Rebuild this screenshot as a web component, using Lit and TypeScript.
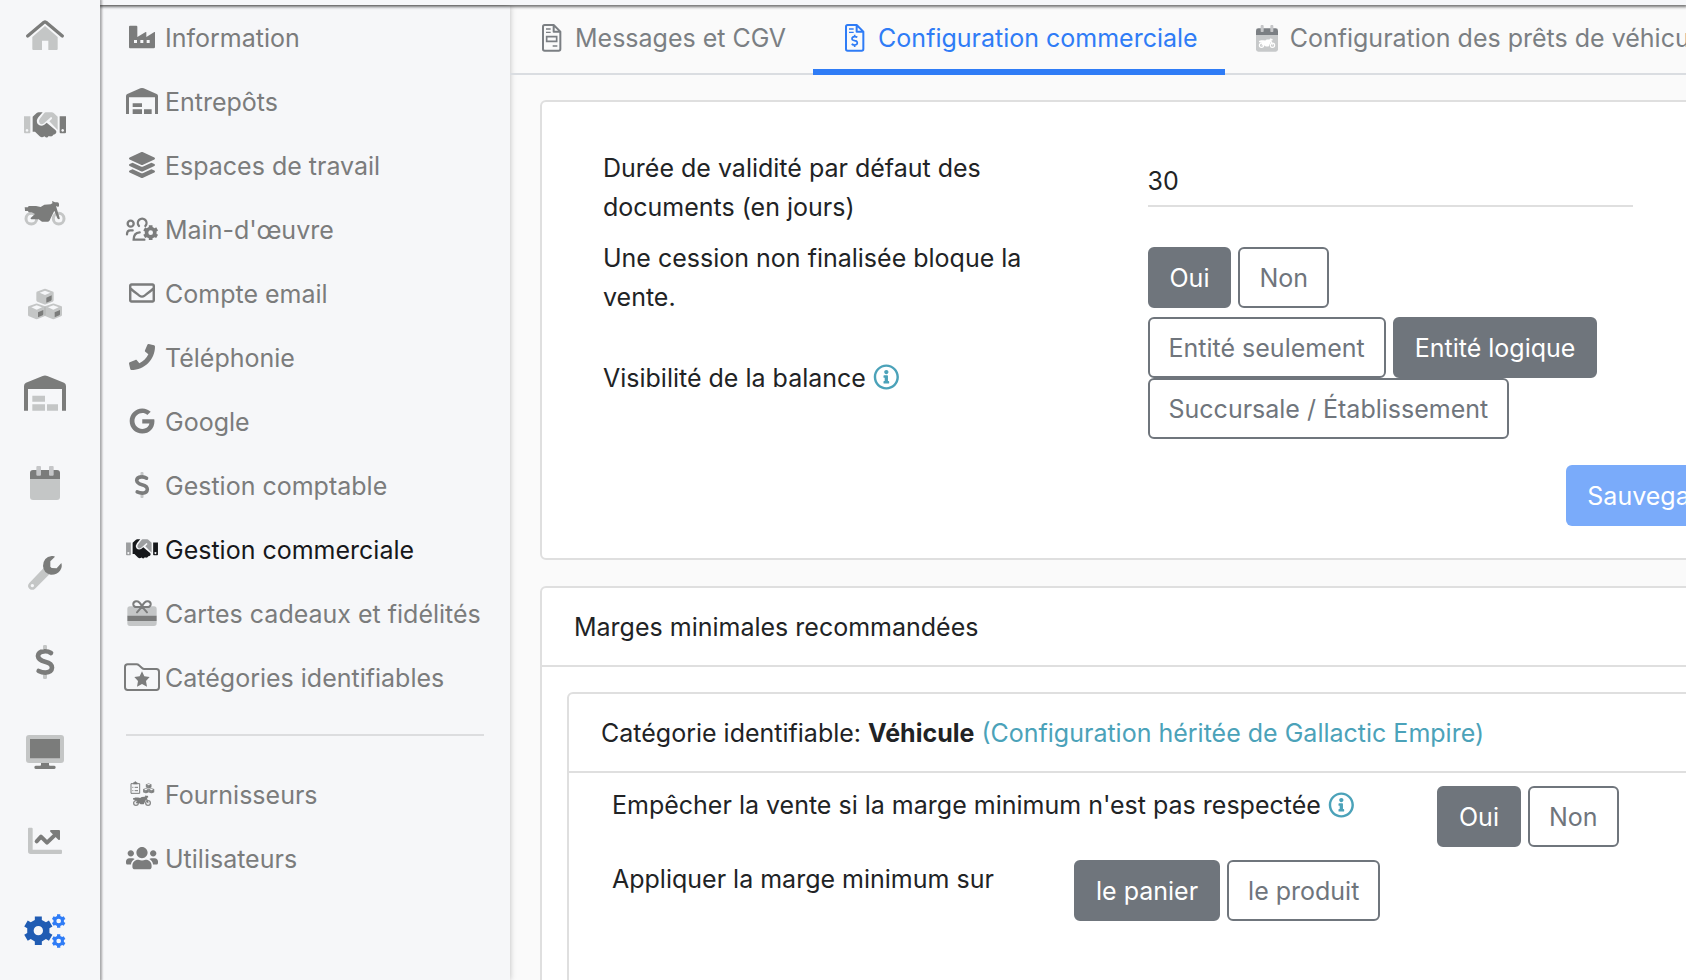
import { LitElement, html, svg, css, nothing, type TemplateResult, type SVGTemplateResult } from "lit";
import { customElement, property, state } from "lit/decorators.js";
import { classMap } from "lit/directives/class-map.js";

/* ---------- icon drawing helpers ---------- */

function gearPath(cx: number, cy: number, outer: number, inner: number, hole: number, teeth: number): string {
  const step = (Math.PI * 2) / teeth;
  const points: string[] = [];
  for (let i = 0; i < teeth; i++) {
    const a = i * step - Math.PI / 2;
    const corners: [number, number][] = [
      [inner, -0.3],
      [outer, -0.23],
      [outer, 0.23],
      [inner, 0.3],
    ];
    for (const [r, k] of corners) {
      points.push(`${(cx + r * Math.cos(a + k * step)).toFixed(1)} ${(cy + r * Math.sin(a + k * step)).toFixed(1)}`);
    }
  }
  return (
    `M${points.join("L")}Z` +
    `M${cx - hole} ${cy}a${hole} ${hole} 0 1 0 ${hole * 2} 0a${hole} ${hole} 0 1 0 ${-hole * 2} 0Z`
  );
}

const gear = (cls: string, cx: number, cy: number, outer: number, inner: number, hole: number, teeth = 6) =>
  svg`<path class=${cls} fill-rule="evenodd" d=${gearPath(cx, cy, outer, inner, hole, teeth)}></path>`;

/* Shapes below are centred on 0,0 in a space of three units per pixel. */
const handshake = svg`
  <path class="lo" fill-rule="evenodd" d="M-63-26h19v48q0 3-3 3h-13q-3 0-3-3ZM-54 12a4 4 0 1 0 .1 0Z"/>
  <path class="hi" fill-rule="evenodd" d="M44-26h19v48q0 3-3 3H47q-3 0-3-3ZM53 12a4 4 0 1 0 .1 0Z"/>
  <path class="lo" d="M2-38H20q4 0 7 3L38-25V15L13-11l8-8q1-4-3-5L-2-6q-8 7-14 1-5-6 0-13L-2-36q2-2 4-2Z"/>
  <path class="hi" d="M-37-25-25-36q3-2 6-2h12L-20-23q-8 10-2 20 9 9 20 2l7-6L32 16q4 4 1 9-3 4-8 4-3 6-9 5-4 0-5-1-3 6-9 4l-4-3q-7 6-14 0L-30 20h-7Z"/>`;

const motorcycle = svg`
  <circle class="lo-line" cx="-41" cy="14" r="16" stroke-width="9"/>
  <circle class="lo-line" cx="41" cy="14" r="16" stroke-width="9"/>
  <path class="hi" d="M-51-20q0-4 4-4h20l14 3 11-7 19-1 6-4-2-3q-1-2 2-2l7 3h7q5 0 5 5v5q0 4-4 3l-5-2 11 36q1 4-2 4t-5-3L28-10 13 21q-2 2-5 2h-17l-10-7h-21q-4 0-3-4l13-12-10-5h-8q-3-2-3-4h-9q0-6-1-11Z"/>`;

const cube = (cx: number, cy: number) => svg`<g transform=${`translate(${cx} ${cy})`}>
    <path class="lo" d="M-25-14-3-22q3-1 6 0l22 8q1 1 1 3v23q0 3-3 4L3 24q-3 1-6 0l-20-8q-3-1-3-4v-23Z"/>
    <path class="cut" d="M-16-11 0-17 16-11 0-4Z"/>
    <path class="hi" d="M4 4 20-3V9q0 3-2 4L4 19Z"/>
  </g>`;

const cubes = svg`${cube(0, -23)}${cube(-25, 21)}${cube(25, 21)}`;

const dollar = svg`
  <path class="lo" d="M-6-37v-10q0-4 4-4h4q4 0 4 4v10ZM-6 37v10q0 4 4 4h4q4 0 4-4V37Z"/>
  <path class="hi-line" stroke-width="14" stroke-linecap="round" d="M18-27Q9-33-3-32-20-31-21-18-20-6 0-1 21 4 21 17 20 31 1 32-9 32-19 27"/>`;

const icons: Record<string, SVGTemplateResult> = {
  home: svg`
    <path class="lo" d="M0-27 38 6v36q0 3-3 3H10V17H-9v28h-26q-3 0-3-3V6Z"/>
    <path class="hi-line" stroke-width="10" stroke-linecap="round" stroke-linejoin="round" d="M-52 3-3-38q3-2 6 0L52 3"/>`,
  handshake,
  motorcycle,
  cubes,
  warehouse: svg`
    <path class="hi" d="M-63 53v-74q0-7 6-10l50-20q7-3 14 0l50 20q6 3 6 10v74H51v-65H-51v65Z"/>
    <path class="lo" d="M-38 8H0v18h-38ZM-38 34H0v19h-38ZM6 34h33v19H6Z"/>`,
  calendar: svg`
    <path class="lo" d="M-45-12h90v54q0 9-9 9h-72q-9 0-9-9Z"/>
    <path class="hi" d="M-45-12v-18q0-9 9-9h72q9 0 9 9v18Z"/>
    <path class="mid" d="M-26-48q0-3 3-3h8q3 0 3 3v23q0 3-3 3h-8q-3 0-3-3ZM12-48q0-3 3-3h8q3 0 3 3v23q0 3-3 3h-8q-3 0-3-3Z"/>`,
  wrench: svg`
    <path class="lo" fill-rule="evenodd" d="M-4-15 14 3-30 47q-8 7-17 0-8-8 0-17ZM-38 33a5 5 0 1 0 .1 0Z"/>
    <path class="hi" d="M30-49 16-35v16l4 4 15 1L49-30q4 12-4 23Q35 6 17 5-4 1-6-21-5-48 20-51q7-1 10 2Z"/>`,
  dollar,
  monitor: svg`
    <rect class="lo" x="-57" y="-51" width="114" height="84" rx="9"/>
    <path class="hi" d="M-45-39h90v58h-90ZM-12 33h24v6q0 2 3 2h13q4 0 4 5t-4 5h-56q-4 0-4-5t4-5h13q3 0 3-2Z"/>`,
  chart: svg`
    <path class="lo" d="M-51-37q0-3 3-3h8q3 0 3 3v63h85q3 0 3 3v7q0 3-3 3h-91q-8 0-8-8Z"/>
    <path class="hi-line" stroke-width="12" stroke-linejoin="round" stroke-linecap="round" d="M-25 1-12-13 6 5 32-20"/>
    <path class="hi" d="M16-28q-3-5 2-5h24q3 0 3 3v24q0 5-5 2Z"/>`,
  cogs: svg`${gear("hi", -20, -1, 44, 34, 14)}${gear("lo", 41, -30, 21, 16, 7)}${gear("lo", 41, 30, 21, 16, 7)}`,
  industry: svg`
    <path class="hi" fill-rule="evenodd" d="M-39-34q0-3 3-3h19q3 0 3 3v31l25-15q2-1 2 1v14l24-15q2-1 2 1v44q0 4-4 4h-71q-3 0-3-3ZM-24 6v9h9V6ZM-5 6v9h9V6ZM14 6v9h9V6Z"/>`,
  depot: svg`
    <path class="hi" d="M-48 36v-54q0-4 4-6l39-17q5-2 10 0l39 17q4 2 4 6v54h-9v-50h-78v50ZM-28 4H0v11h-28ZM-28 22H0v14h-28ZM6 22h23v14H6Z"/>`,
  layers: svg`<g transform="translate(-39 -42) scale(.1523)"><path class="hi" d="M12.41 148.02l232.94 105.67c6.8 3.09 14.49 3.09 21.29 0l232.94-105.67c16.55-7.51 16.55-32.52 0-40.03L266.65 2.31a25.607 25.607 0 0 0-21.29 0L12.41 107.98c-16.55 7.51-16.55 32.53 0 40.04zm487.18 88.28l-58.09-26.33-161.64 73.27c-7.56 3.43-15.59 5.17-23.86 5.17s-16.29-1.74-23.86-5.17L70.51 209.97l-58.1 26.33c-16.55 7.5-16.55 32.5 0 40l232.94 105.59c6.8 3.08 14.49 3.08 21.29 0L499.59 276.3c16.55-7.5 16.55-32.5 0-40zm0 127.8l-57.87-26.23-161.86 73.37c-7.56 3.43-15.59 5.17-23.86 5.17s-16.29-1.74-23.86-5.17L70.29 337.87 12.41 364.1c-16.55 7.5-16.55 32.5 0 40l232.94 105.59c6.8 3.08 14.49 3.08 21.29 0L499.59 404.1c16.55-7.5 16.55-32.5 0-40z"/></g>`,
  workforce: svg`
    <circle class="hi-line" cx="-34" cy="-19" r="9" stroke-width="7"/>
    <path class="hi-line" stroke-width="7" stroke-linecap="round" d="M10-12a13 13 0 1 0-19 0M-45 13Q-45 1-35 1h7M7 29h-32q0-21 18-22"/>
    ${gear("hi", 26, 8, 23, 18, 7)}`,
  envelope: svg`<g transform="translate(-39 -42) scale(.1523)"><path class="hi" d="M464 64H48C21.49 64 0 85.49 0 112v288c0 26.51 21.49 48 48 48h416c26.51 0 48-21.49 48-48V112c0-26.51-21.49-48-48-48zm0 48v40.805c-22.422 18.259-58.168 46.651-134.587 106.49-16.841 13.247-50.201 45.072-73.413 44.701-23.208.375-56.579-31.459-73.413-44.701C106.18 199.465 70.425 171.067 48 152.805V112h416zM48 400V214.398c22.914 18.251 55.409 43.862 104.938 82.646 21.857 17.205 60.134 55.186 103.062 54.955 42.717.231 80.509-37.199 103.053-54.947 49.528-38.783 82.032-64.401 104.947-82.653V400H48z"/></g>`,
  phone: svg`<g transform="translate(-39 -42) scale(.1523)"><path class="hi" d="M493.4 24.6l-104-24c-11.3-2.6-22.9 3.3-27.5 13.9l-48 112c-4.2 9.8-1.4 21.3 6.9 28l60.6 49.6c-36 76.7-98.9 140.5-177.2 177.2l-49.6-60.6c-6.8-8.3-18.2-11.1-28-6.9l-112 48C3.9 366.5-2 378.1.6 389.4l24 104C27.1 504.2 36.7 512 48 512c256.1 0 464-207.5 464-464 0-11.2-7.7-20.9-18.6-23.4z"/></g>`,
  google: svg`<g transform="translate(-37 -42) scale(.1523)"><path class="hi" d="M488 261.8C488 403.3 391.1 504 248 504 110.8 504 0 393.2 0 256S110.8 8 248 8c66.8 0 123 24.5 166.3 64.9l-67.5 64.9C258.5 52.6 94.3 116.6 94.3 256c0 86.5 69.1 156.6 153.7 156.6 98.2 0 135-70.4 140.8-106.9H248v-85.3h236.1c2.3 12.7 3.9 24.9 3.9 41.4z"/></g>`,
  accounting: svg`<g transform="translate(0 -3) scale(.76)">${dollar}</g>`,
  sales: svg`<g transform="translate(0 -3) scale(.76)">${handshake}</g>`,
  gift: svg`
    <path class="lo" d="M-44-15q0-8 8-8h72q8 0 8 8V5h-88ZM-44 21h88v7q0 8-8 8h-72q-8 0-8-8Z"/>
    <path class="hi" d="M-44 5h88v16h-88Z"/>
    <path class="hi-line" stroke-width="6" stroke-linecap="round" d="M0-22q-7-17-18-16-9 2-8 10 2 8 11 7 8 0 15-1 7-17 18-16 9 2 8 10-2 8-11 7-8 0-15-1L-15-5M0-22 15-5"/>`,
  folder: svg`
    <path class="hi-line" stroke-width="6" stroke-linejoin="round" d="M-51-33q0-8 8-8h27q4 0 6 2l10 9q3 3 7 3h36q8 0 8 8v47q0 8-8 8h-86q-8 0-8-8Z"/>
    <path class="hi" d="M0-20 7-5 23-3 12 9l3 17L0 18l-15 8 3-17L-23-3-7-5Z"/>`,
  suppliers: svg`
    <path class="hi-line" stroke-width="3" d="M-33-34h26V-5h-26ZM-29-23h3M-22-23h10M-29-13h3M-22-13h10"/>
    <path class="hi" d="M-26-38h3q3-6 6 0h3v6h-12Z"/>
    <g class="solid" transform="translate(20 -20) scale(.33)">${cubes}</g>
    <g class="solid" transform="translate(0 18) scale(.44)">${motorcycle}</g>`,
  users: svg`<g transform="translate(-48 -41) scale(.15)"><path class="hi" d="M96 224c35.3 0 64-28.7 64-64s-28.7-64-64-64-64 28.7-64 64 28.7 64 64 64zm448 0c35.3 0 64-28.7 64-64s-28.7-64-64-64-64 28.7-64 64 28.7 64 64 64zm32 32h-64c-17.6 0-33.5 7.1-45.1 18.6 40.3 22.1 68.9 62 75.1 109.4h66c17.7 0 32-14.3 32-32v-32c0-35.3-28.7-64-64-64zm-256 0c61.9 0 112-50.1 112-112S381.9 32 320 32 208 82.1 208 144s50.1 112 112 112zm76.8 32h-8.3c-20.8 10-43.9 16-68.5 16s-47.6-6-68.5-16h-8.3C179.6 288 128 339.6 128 403.2V432c0 26.5 21.5 48 48 48h288c26.5 0 48-21.5 48-48v-28.8c0-63.6-51.6-115.2-115.2-115.2zm-223.7-13.4C161.5 263.1 145.6 256 128 256H64c-35.3 0-64 28.7-64 64v32c0 17.7 14.3 32 32 32h65.9c6.3-47.4 34.9-87.3 75.2-109.4z"/></g>`,
  message: svg`
    <path class="hi-line" stroke-width="6" stroke-linejoin="round" d="M-27-37q0-5 5-5H5L25-22v52q0 5-5 5h-42q-5 0-5-5ZM5-42v20h20"/>
    <path class="hi-line" stroke-width="4" d="M-18-30H-4M-18-20H-4M2 21h14"/>
    <path class="hi-line" stroke-width="5" d="M-16-7h30V7h-30Z"/>`,
  invoice: svg`
    <path class="hi-line" stroke-width="6" stroke-linejoin="round" d="M-27-37q0-5 5-5H5L25-22v52q0 5-5 5h-42q-5 0-5-5ZM5-42v20h20"/>
    <path class="hi-line" stroke-width="4" d="M-18-30H-4M-18-20H-4"/>
    <path class="hi-line" stroke-width="5" d="M7-5Q2-8-2-7q-7 1-7 6 0 4 8 6 8 1 8 7 0 5-8 6-5 0-9-3M-1-13v6M-1 18v6"/>`,
  loan: svg`
    <path class="lo" d="M-33-12h66v43q0 7-7 7h-52q-7 0-7-7Z"/>
    <path class="hi" d="M-33-12v-13q0-7 7-7h52q7 0 7 7v13Z"/>
    <path class="mid" d="M-19-39q0-3 3-3h3q3 0 3 3v16q0 2-2 2h-5q-2 0-2-2ZM10-39q0-3 3-3h3q3 0 3 3v16q0 2-2 2h-5q-2 0-2-2Z"/>
    <g class="blank" transform="translate(0 13) scale(.4)">${motorcycle}</g>`,
  info: svg`<g transform="translate(-38 -42) scale(.1523)"><path class="hi" d="M256 8C119.043 8 8 119.083 8 256c0 136.997 111.043 248 248 248s248-111.003 248-248C504 119.083 392.957 8 256 8zm0 448c-110.532 0-200-89.431-200-200 0-110.495 89.472-200 200-200 110.491 0 200 89.471 200 200 0 110.53-89.431 200-200 200zm0-338c23.196 0 42 18.804 42 42s-18.804 42-42 42-42-18.804-42-42 18.804-42 42-42zm56 254c0 6.627-5.373 12-12 12h-88c-6.627 0-12-5.373-12-12v-24c0-6.627 5.373-12 12-12h12v-64h-12c-6.627 0-12-5.373-12-12v-24c0-6.627 5.373-12 12-12h64c6.627 0 12 5.373 12 12v100h12c6.627 0 12 5.373 12 12v24z"/></g>`,
};

@customElement("app-icon")
export class AppIcon extends LitElement {
  @property() name = "";

  static styles = css`
    :host {
      display: inline-flex;
      justify-content: center;
      flex: none;
    }
    svg {
      display: block;
      flex: none;
      width: 42px;
      height: 36px;
      margin: 0 -5px;
    }
    .hi { fill: var(--icon-hi, currentColor); }
    .lo { fill: var(--icon-lo, currentColor); fill-opacity: var(--icon-fade, 0.4); }
    .hi-line { fill: none; stroke: var(--icon-hi, currentColor); }
    .lo-line { fill: none; stroke: var(--icon-lo, currentColor); stroke-opacity: var(--icon-fade, 0.4); }
    .mid { fill: #c5c6c8; }
    .cut { fill: #f6f7f9; }
    .solid { --icon-fade: 0.9; }
    .blank { --icon-hi: #fff; --icon-lo: #fff; --icon-fade: 1; }
  `;

  render() {
    return html`<svg viewBox="-63 -54 126 108" aria-hidden="true">${icons[this.name] ?? nothing}</svg>`;
  }
}

/* ---------- option buttons ---------- */

@customElement("option-group")
export class OptionGroup extends LitElement {
  @property() label = "";
  @property({ attribute: false }) options: string[] = [];
  @property() value = "";

  static styles = css`
    :host { display: block; }
    .group {
      display: flex;
      flex-wrap: wrap;
      gap: 0 7px;
    }
    .option {
      box-sizing: border-box;
      padding: 10px 19px 8px;
      border: 2px solid #6f757c;
      border-radius: 6px;
      background: transparent;
      color: #6f757c;
      font: inherit;
      white-space: nowrap;
      cursor: pointer;
    }
    .selected {
      padding: 10px 20px 8px;
      background: #6f757c;
      color: #fff;
    }
  `;

  render() {
    return html`<div class="group" role="group" aria-label=${this.label}>
      ${this.options.map(
        (o) => html`<button
          type="button"
          class=${classMap({ option: true, selected: o === this.value })}
          aria-pressed=${o === this.value ? "true" : "false"}
          @click=${() => (this.value = o)}
        >${o}</button>`,
      )}
    </div>`;
  }
}

/* ---------- page ---------- */

type Entry = { icon: string; text: string };

const railEntries: Entry[] = [
  { icon: "home", text: "Accueil" },
  { icon: "handshake", text: "Commerce" },
  { icon: "motorcycle", text: "Véhicules" },
  { icon: "cubes", text: "Produits" },
  { icon: "warehouse", text: "Stock" },
  { icon: "calendar", text: "Agenda" },
  { icon: "wrench", text: "Atelier" },
  { icon: "dollar", text: "Comptabilité" },
  { icon: "monitor", text: "Site" },
  { icon: "chart", text: "Statistiques" },
  { icon: "cogs", text: "Configuration" },
];

const mainEntries: Entry[] = [
  { icon: "industry", text: "Information" },
  { icon: "depot", text: "Entrepôts" },
  { icon: "layers", text: "Espaces de travail" },
  { icon: "workforce", text: "Main-d'œuvre" },
  { icon: "envelope", text: "Compte email" },
  { icon: "phone", text: "Téléphonie" },
  { icon: "google", text: "Google" },
  { icon: "accounting", text: "Gestion comptable" },
  { icon: "sales", text: "Gestion commerciale" },
  { icon: "gift", text: "Cartes cadeaux et fidélités" },
  { icon: "folder", text: "Catégories identifiables" },
];

const otherEntries: Entry[] = [
  { icon: "suppliers", text: "Fournisseurs" },
  { icon: "users", text: "Utilisateurs" },
];

const tabs: Entry[] = [
  { icon: "message", text: "Messages et CGV" },
  { icon: "invoice", text: "Configuration commerciale" },
  { icon: "loan", text: "Configuration des prêts de véhicule" },
];

@customElement("app-root")
export class AppRoot extends LitElement {
  @state() private section = "Gestion commerciale";
  @state() private tab = "Configuration commerciale";

  static styles = css`
    :host {
      display: block;
      font-family: Inter, "Liberation Sans", sans-serif;
      font-size: 25px;
      line-height: 39px;
      color: #212325;
    }
    a {
      color: inherit;
      text-decoration: none;
    }
    .app {
      display: flex;
      height: 100vh;
      overflow: hidden;
      background: #fafafa;
    }
    .rail {
      box-sizing: border-box;
      display: flex;
      flex-direction: column;
      align-items: center;
      justify-content: space-between;
      flex: 0 0 100px;
      padding: 17px 10px 31px 0;
      background: #f6f7f9;
      box-shadow: 1px 0 2px 1px rgba(0, 0, 0, 0.32);
      color: #7b7c7b;
      z-index: 2;
    }
    .rail-link { display: flex; width: 42px; justify-content: center; }
    .rail-active {
      --icon-hi: #205cb3;
      --icon-lo: #2f7cf6;
      --icon-fade: 1;
    }
    .workspace {
      display: flex;
      flex-direction: column;
      flex: 1;
      min-width: 0;
    }
    .topbar {
      flex: 0 0 5px;
      margin-bottom: 1px;
      background: #f6f7f9;
      box-shadow: 0 1px 3px 1px rgba(0, 0, 0, 0.55);
      z-index: 1;
    }
    .columns {
      display: flex;
      flex: 1;
      min-height: 0;
    }
    .sidebar {
      box-sizing: border-box;
      flex: 0 0 410px;
      padding: 0 26px;
      background: #f6f7f9;
      box-shadow: 0 0 6px rgba(0, 0, 0, 0.25);
      color: #7b7c7c;
    }
    .side-link {
      display: flex;
      align-items: center;
      gap: 7px;
      height: 64px;
      white-space: nowrap;
    }
    .side-link app-icon { width: 32px; }
    .side-active { color: #16181b; }
    .divider {
      height: 2px;
      margin: 24px 0 27px;
      border: 0;
      background: #dcdddf;
    }
    .content {
      flex: 1;
      min-width: 0;
      overflow: hidden;
    }
    .tabs {
      display: flex;
      color: #7b7f83;
      box-shadow: inset 0 -2px #dadde1;
    }
    .tab {
      display: flex;
      flex: none;
      align-items: center;
      gap: 7px;
      padding: 13px 27px 11px 26px;
      border-bottom: 6px solid transparent;
      white-space: nowrap;
    }
    .tab app-icon { width: 32px; }
    .tab-active {
      color: #2f7cf6;
      border-color: #2f7cf6;
    }
    /* The panels are wider than the pane and run past its right edge. */
    .panels {
      display: grid;
      gap: 26px;
      padding: 25px 0 0 30px;
      margin-right: -132px;
    }
    .card {
      border: 2px solid #dfdfdf;
      border-radius: 6px;
      background: #fff;
    }
    .form { padding: 47px 57px 32px 61px; }
    .fields {
      display: grid;
      grid-template-columns: 1fr 1fr;
      column-gap: 59px;
      margin-right: 126px;
    }
    .field-label { margin-bottom: 12px; }
    .visibility {
      display: flex;
      align-items: center;
      gap: 7px;
    }
    .days {
      box-sizing: border-box;
      align-self: start;
      width: 100%;
      height: 52px;
      margin-top: 6px;
      padding: 2px 0 0;
      border: 0;
      border-bottom: 2px solid #dfdfdf;
      border-radius: 0;
      background: transparent;
      color: #212325;
      font: inherit;
      outline: 0;
    }
    .blocking { margin-top: 8px; }
    .info {
      display: inline-flex;
      width: 26px;
      justify-content: center;
      color: #4ba2b9;
    }
    .actions {
      display: flex;
      justify-content: flex-end;
      margin-top: 26px;
    }
    .save {
      padding: 12px 21px 10px;
      border: 0;
      border-radius: 6px;
      background: #7aabfa;
      color: #fff;
      font: inherit;
    }
    .card-title {
      margin: 0;
      padding: 20px 32px 18px;
      border-bottom: 2px solid #dfdfdf;
      font: inherit;
    }
    .card-body { padding: 25px; }
    .category { min-height: 360px; }
    .inherited { color: #4ba2b9; }
    .rules {
      display: grid;
      gap: 13px;
      padding: 13px 43px;
    }
    .rule { display: flex; }
    .rule-label {
      display: flex;
      align-items: center;
      align-self: flex-start;
      gap: 7px;
      flex: none;
      white-space: nowrap;
    }
    .wide { width: 825px; }
    .narrow { width: 462px; }
  `;

  private sideLink(e: Entry): TemplateResult {
    const active = e.text === this.section;
    return html`<a
      href="#"
      class=${classMap({ "side-link": true, "side-active": active })}
      aria-current=${active ? "page" : nothing}
      @click=${(ev: Event) => {
        ev.preventDefault();
        this.section = e.text;
      }}
      ><app-icon name=${e.icon}></app-icon><span>${e.text}</span></a
    >`;
  }

  render() {
    return html`<div class="app">
      <nav class="rail" aria-label="Modules">
        ${railEntries.map(
          (e) => html`<a
            href="#"
            class=${classMap({ "rail-link": true, "rail-active": e.icon === "cogs" })}
            aria-label=${e.text}
            ><app-icon name=${e.icon}></app-icon
          ></a>`,
        )}
      </nav>
      <div class="workspace">
        <div class="topbar"></div>
        <div class="columns">
          <nav class="sidebar" aria-label="Configuration">
            ${mainEntries.map((e) => this.sideLink(e))}
            <hr class="divider" />
            ${otherEntries.map((e) => this.sideLink(e))}
          </nav>
          <main class="content">
            <nav class="tabs" aria-label="Onglets">
              ${tabs.map(
                (t) => html`<a
                  href="#"
                  class=${classMap({ tab: true, "tab-active": t.text === this.tab })}
                  @click=${(ev: Event) => {
                    ev.preventDefault();
                    this.tab = t.text;
                  }}
                  ><app-icon name=${t.icon}></app-icon><span>${t.text}</span></a
                >`,
              )}
            </nav>
            <div class="panels">
              <form class="card form" @submit=${(ev: Event) => ev.preventDefault()}>
                <div class="fields">
                  <label class="field-label" for="days">Durée de validité par défaut des documents (en jours)</label>
                  <input class="days" id="days" type="text" inputmode="numeric" value="30" />
                  <div>Une cession non finalisée bloque la vente.</div>
                  <option-group
                    class="blocking"
                    label="Une cession non finalisée bloque la vente."
                    .options=${["Oui", "Non"]}
                    value="Oui"
                  ></option-group>
                  <div class="visibility">
                    Visibilité de la balance <span class="info"><app-icon name="info"></app-icon></span>
                  </div>
                  <option-group
                    label="Visibilité de la balance"
                    .options=${["Entité seulement", "Entité logique", "Succursale / Établissement"]}
                    value="Entité logique"
                  ></option-group>
                </div>
                <div class="actions"><button class="save" type="submit" disabled>Sauvegarder</button></div>
              </form>
              <section class="card">
                <h2 class="card-title">Marges minimales recommandées</h2>
                <div class="card-body">
                  <section class="card category">
                    <h3 class="card-title">
                      Catégorie identifiable: <strong>Véhicule</strong>
                      <span class="inherited">(Configuration héritée de Gallactic Empire)</span>
                    </h3>
                    <div class="rules">
                      <div class="rule">
                        <div class="rule-label wide">
                          Empêcher la vente si la marge minimum n'est pas respectée
                          <span class="info"><app-icon name="info"></app-icon></span>
                        </div>
                        <option-group
                          label="Empêcher la vente si la marge minimum n'est pas respectée"
                          .options=${["Oui", "Non"]}
                          value="Oui"
                        ></option-group>
                      </div>
                      <div class="rule">
                        <div class="rule-label narrow">Appliquer la marge minimum sur</div>
                        <option-group
                          label="Appliquer la marge minimum sur"
                          .options=${["le panier", "le produit"]}
                          value="le panier"
                        ></option-group>
                      </div>
                    </div>
                  </section>
                </div>
              </section>
            </div>
          </main>
        </div>
      </div>
    </div>`;
  }
}
